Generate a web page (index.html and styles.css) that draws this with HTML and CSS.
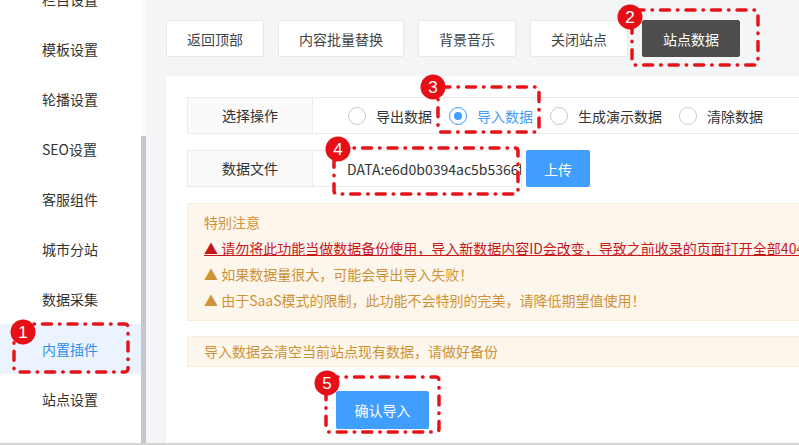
FILE: index.html
```html
<!DOCTYPE html>
<html>
<head>
    <meta charset="utf-8">
    <title>站点数据</title>
    <link rel="stylesheet" href="styles.css">
</head>
<body>
    <div class="layout">
        <aside class="sidebar">
            <ul class="menu">
                <li>栏目设置</li>
                <li>模板设置</li>
                <li>轮播设置</li>
                <li>SEO设置</li>
                <li>客服组件</li>
                <li>城市分站</li>
                <li>数据采集</li>
                <li class="active">内置插件</li>
                <li>站点设置</li>
            </ul>
            <div class="scrollbar"><div class="thumb"></div></div>
        </aside>

        <main class="content">
            <div class="toolbar">
                <button type="button" class="tool-btn">返回顶部</button>
                <button type="button" class="tool-btn">内容批量替换</button>
                <button type="button" class="tool-btn">背景音乐</button>
                <button type="button" class="tool-btn">关闭站点</button>
                <button type="button" class="tool-btn current">站点数据</button>
            </div>

            <section class="panel">
                <div class="form-row">
                    <div class="form-label">选择操作</div>
                    <div class="radio-group">
                        <label class="radio"><span class="radio-dot"></span>导出数据</label>
                        <label class="radio checked"><span class="radio-dot"></span>导入数据</label>
                        <label class="radio"><span class="radio-dot"></span>生成演示数据</label>
                        <label class="radio"><span class="radio-dot"></span>清除数据</label>
                    </div>
                </div>

                <div class="form-row">
                    <div class="form-label">数据文件</div>
                    <input type="text" class="file-input" value="DATA:e6d0b0394ac5b5366f2c81a7" readonly>
                    <button type="button" class="btn-primary btn-upload">上传</button>
                </div>

                <div class="notice">
                    <div>特别注意</div>
                    <div class="danger">▲ 请勿将此功能当做数据备份使用，导入新数据内容ID会改变，导致之前收录的页面打开全部404</div>
                    <div>▲ 如果数据量很大，可能会导出导入失败！</div>
                    <div>▲ 由于SaaS模式的限制，此功能不会特别的完美，请降低期望值使用！</div>
                </div>

                <div class="notice notice-tip">导入数据会清空当前站点现有数据，请做好备份</div>

                <button type="button" class="btn-primary btn-confirm">确认导入</button>
            </section>
        </main>
    </div>

    <!-- numbered step marks -->
    <svg class="marks" width="799" height="445" viewBox="0 0 799 445">
        <g class="mark-box">
            <rect x="14" y="324" width="114" height="48" rx="3"/>
            <rect x="632" y="10" width="126" height="55" rx="3"/>
            <rect x="438" y="87" width="101" height="45" rx="3"/>
            <rect x="334" y="148" width="184" height="46" rx="3"/>
            <rect x="326" y="377" width="113" height="55" rx="3"/>
        </g>
        <g class="mark-num">
            <circle cx="23" cy="332" r="12.5"/><text x="23" y="338">1</text>
            <circle cx="630" cy="17" r="12.5"/><text x="630" y="23">2</text>
            <circle cx="433" cy="87" r="12.5"/><text x="433" y="93">3</text>
            <circle cx="338" cy="149" r="12.5"/><text x="338" y="155">4</text>
            <circle cx="327" cy="383" r="12.5"/><text x="327" y="389">5</text>
        </g>
    </svg>
</body>
</html>
```

FILE: styles.css
```css
html, body {
    margin: 0;
    padding: 0;
}
body {
    font-family: "Noto Sans CJK SC", "Liberation Sans", sans-serif;
    font-size: 14px;
    color: #333;
    background: #f4f5f7;
    height: 445px;
    overflow: hidden;
}
.layout {
    display: flex;
    height: 443px;
    border-bottom: 2px solid #d4d4d4;
}

/* left menu */
.sidebar {
    display: flex;
    width: 146px;
    background: #fff;
    overflow: hidden;
}
.menu {
    list-style: none;
    margin: -26px 0 0;
    padding: 0;
    width: 141px;
}
.menu li {
    height: 50px;
    line-height: 50px;
    padding-left: 42px;
    color: #333;
}
.menu li.active {
    background: #ebf4fe;
    color: #2f8ff0;
}
.scrollbar {
    width: 5px;
    display: flex;
    flex-direction: column;
    background: #fafafa;
}
.thumb {
    margin-top: 136px;
    flex: 1;
    background: #c4c6cb;
}

/* right side */
.content {
    flex: 1;
    min-width: 0;
    padding: 20px 0 0 20px;
    overflow: hidden;
}
.toolbar {
    display: flex;
    gap: 14px;
}
.tool-btn {
    height: 37px;
    padding: 0 20px;
    background: #fff;
    border: 1px solid #e8e8e8;
    border-radius: 2px;
    font-family: inherit;
    font-size: 14px;
    color: #444;
    cursor: pointer;
}
.tool-btn.current {
    background: #4d4d4d;
    border-color: #4d4d4d;
    color: #fff;
}
.panel {
    width: 700px;
    height: 347px;
    margin-top: 19px;
    padding: 21px 0 0 21px;
    background: #fff;
}
.form-row {
    display: flex;
    height: 37px;
    margin-bottom: 16px;
}
.form-label {
    width: 126px;
    box-sizing: border-box;
    border: 1px solid #ebebeb;
    background: #fafafa;
    line-height: 35px;
    text-align: center;
}
.radio-group {
    flex: 1;
    display: flex;
    align-items: center;
    padding-left: 35px;
    border: 1px solid #ebebeb;
    border-left: none;
}
.radio {
    display: flex;
    align-items: center;
    margin-right: 17px;
    color: #333;
}
.radio-dot {
    width: 18px;
    height: 18px;
    box-sizing: border-box;
    border: 1px solid #c6c9cf;
    border-radius: 50%;
    margin-right: 10px;
    display: flex;
    align-items: center;
    justify-content: center;
}
.radio.checked {
    color: #409eff;
}
.radio.checked .radio-dot {
    border-color: #409eff;
}
.radio.checked .radio-dot::after {
    content: "";
    width: 8px;
    height: 8px;
    border-radius: 50%;
    background: #409eff;
}
.file-input {
    width: 209px;
    height: 37px;
    box-sizing: border-box;
    padding: 0 0 0 34px;
    border: 1px solid #ebebeb;
    border-left: none;
    font-family: inherit;
    font-size: 14px;
    color: #333;
    outline: none;
}
.btn-primary {
    background: #409eff;
    color: #fff;
    border: none;
    border-radius: 2px;
    font-family: inherit;
    font-size: 14px;
    cursor: pointer;
}
.btn-upload {
    width: 64px;
    height: 37px;
    margin-left: 4px;
}
.notice {
    background: #fdf6ed;
    border: 1px solid #f8ecdc;
    color: #cf9236;
    padding: 5px 16px 7px;
    line-height: 26px;
    white-space: nowrap;
}
.notice .danger {
    color: #c8161d;
    text-decoration: underline;
}
.notice-tip {
    margin-top: 15px;
    padding: 0 16px;
    line-height: 29px;
}
.btn-confirm {
    display: block;
    width: 93px;
    height: 38px;
    margin: 24px 0 0 149px;
}

/* step marks laid over the page */
.marks {
    position: absolute;
    top: 0;
    left: 0;
    pointer-events: none;
}
.mark-box rect {
    fill: none;
    stroke: #e5141b;
    stroke-width: 3.5;
    stroke-linecap: round;
    stroke-dasharray: 9 8 0.5 8;
}
.mark-num circle {
    fill: #e60f17;
}
.mark-num text {
    fill: #fff;
    font-family: "Liberation Sans", Arial, sans-serif;
    font-size: 17px;
    text-anchor: middle;
}
```
